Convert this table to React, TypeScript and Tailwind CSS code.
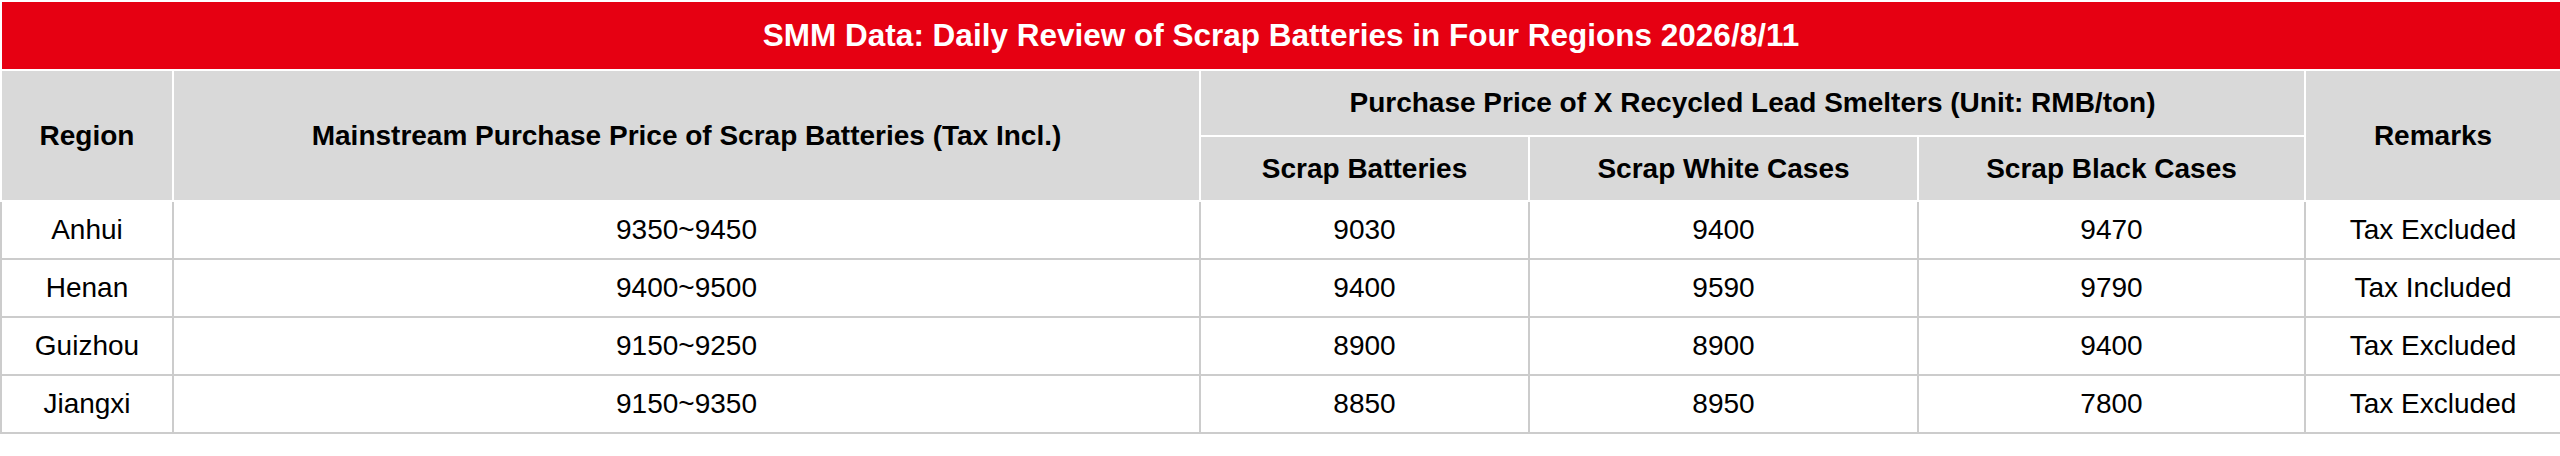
import React from 'react';

interface Row {
  region: string;
  mainstream: string;
  batteries: string;
  white: string;
  black: string;
  remarks: string;
}

const rows: Row[] = [
  { region: 'Anhui', mainstream: '9350~9450', batteries: '9030', white: '9400', black: '9470', remarks: 'Tax Excluded' },
  { region: 'Henan', mainstream: '9400~9500', batteries: '9400', white: '9590', black: '9790', remarks: 'Tax Included' },
  { region: 'Guizhou', mainstream: '9150~9250', batteries: '8900', white: '8900', black: '9400', remarks: 'Tax Excluded' },
  { region: 'Jiangxi', mainstream: '9150~9350', batteries: '8850', white: '8950', black: '7800', remarks: 'Tax Excluded' },
];

export default function App() {
  const head = 'border-2 border-white bg-[#d9d9d9] font-bold text-black text-center align-middle p-0';
  const cell = 'border-2 border-[#cccccc] bg-white text-black text-center align-middle p-0 h-[58px]';

  return (
    <div className="w-[2560px] h-[456px] bg-white" style={{ fontFamily: '"Liberation Sans", Arial, sans-serif' }}>
      <table className="w-[2560px] table-fixed border-collapse text-[28px] leading-none">
        <colgroup>
          <col className="w-[172px]" />
          <col className="w-[1027px]" />
          <col className="w-[329px]" />
          <col className="w-[389px]" />
          <col className="w-[387px]" />
          <col className="w-[256px]" />
        </colgroup>
        <thead>
          {/* Title */}
          <tr>
            <th colSpan={6} className="border-2 border-white bg-[#e60012] text-white text-[31.5px] font-bold text-center align-middle p-0 h-[69px]">
              SMM Data: Daily Review of Scrap Batteries in Four Regions 2026/8/11
            </th>
          </tr>
          <tr>
            <th rowSpan={2} className={head}>Region</th>
            <th rowSpan={2} className={head}>Mainstream Purchase Price of Scrap Batteries (Tax Incl.)</th>
            <th colSpan={3} className={`${head} h-[66px]`}>Purchase Price of X Recycled Lead Smelters (Unit: RMB/ton)</th>
            <th rowSpan={2} className={head}>Remarks</th>
          </tr>
          <tr>
            <th className={`${head} h-[65px]`}>Scrap Batteries</th>
            <th className={`${head} h-[65px]`}>Scrap White Cases</th>
            <th className={`${head} h-[65px]`}>Scrap Black Cases</th>
          </tr>
        </thead>
        <tbody>
          {rows.map((r) => (
            <tr key={r.region}>
              <td className={cell}>{r.region}</td>
              <td className={cell}>{r.mainstream}</td>
              <td className={cell}>{r.batteries}</td>
              <td className={cell}>{r.white}</td>
              <td className={cell}>{r.black}</td>
              <td className={cell}>{r.remarks}</td>
            </tr>
          ))}
        </tbody>
      </table>
    </div>
  );
}
